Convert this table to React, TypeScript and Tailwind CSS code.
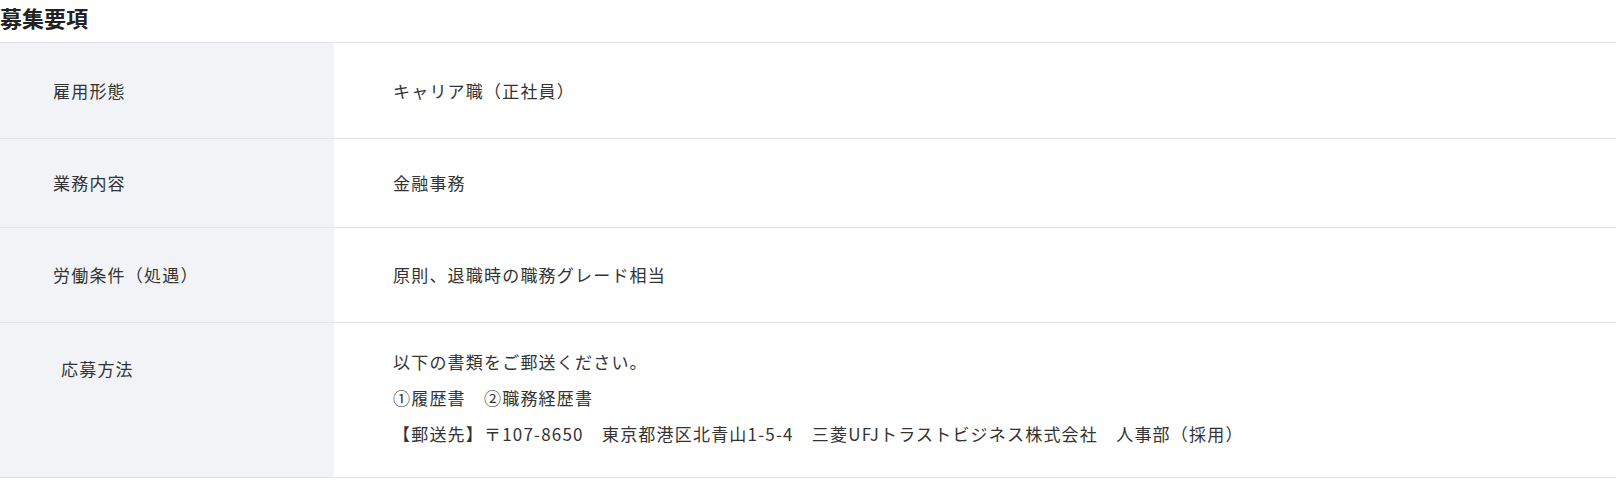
import React from "react";

const FONT = "font-['Noto_Sans_CJK_JP','Noto_Sans',sans-serif]";

function Row({
  label,
  children,
  h,
  top,
  labelClass = "",
}: {
  label: string;
  children: React.ReactNode;
  h?: string;
  top?: boolean;
  labelClass?: string;
}) {
  return (
    <div className={`grid grid-cols-[334px_1fr] border-b border-[#e3e3e3] ${h ?? ""}`}>
      <div
        className={`bg-[#f2f3f7] pl-[53px] flex ${top ? "items-start pt-[28px]" : "items-center"} ${labelClass}`}
      >
        <span className="leading-[36px]">{label}</span>
      </div>
      <div className={`pl-[59px] flex ${top ? "flex-col pt-[21px] pb-[25px]" : "items-center"}`}>
        {children}
      </div>
    </div>
  );
}

export default function App() {
  return (
    <div className={`${FONT} w-[1616px] h-[480px] bg-white text-[#333] text-[17px] tracking-[1.2px]`}>
      <div className="h-[42px] pt-[2px]">
        <h2 className="text-[22px] font-bold leading-[30px] text-[#222] tracking-normal">募集要項</h2>
      </div>
      <div className="border-t border-[#e3e3e3]">
        <Row label="雇用形態" h="h-[96px]">
          <span>キャリア職（正社員）</span>
        </Row>
        <Row label="業務内容" h="h-[89px]">
          <span>金融事務</span>
        </Row>
        <Row label="労働条件（処遇）" h="h-[95px]">
          <span>原則、退職時の職務グレード相当</span>
        </Row>
        <Row label="応募方法" top labelClass="pl-[61px]">
          <p className="leading-[36px]">以下の書類をご郵送ください。</p>
          <p className="leading-[36px]">①履歴書　②職務経歴書</p>
          <p className="leading-[36px]">【郵送先】〒107-8650　東京都港区北青山1-5-4　三菱UFJトラストビジネス株式会社　人事部（採用）</p>
        </Row>
      </div>
    </div>
  );
}
